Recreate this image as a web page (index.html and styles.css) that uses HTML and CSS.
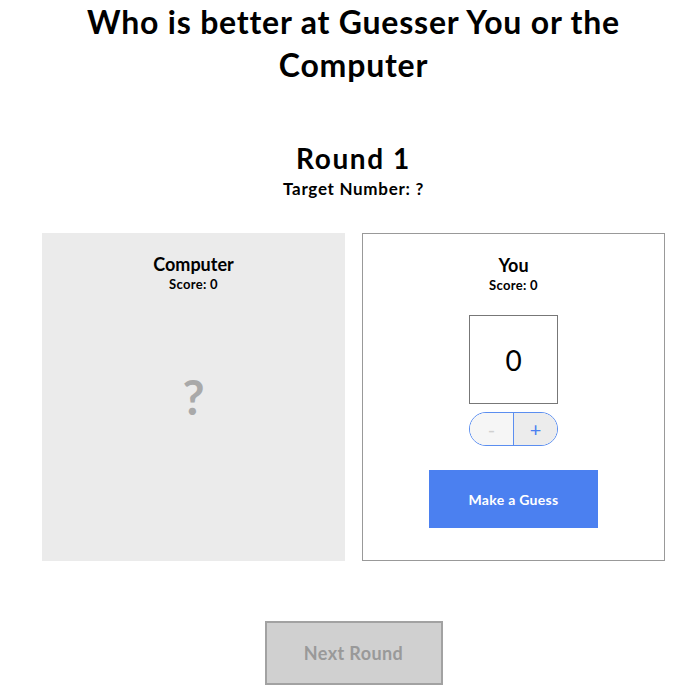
FILE: index.html
```html
<!DOCTYPE html>
<html>
<head>
<meta charset="utf-8">
<link rel="stylesheet" href="styles.css">
</head>
<body>
<div class="page">
  <h1 class="title">Who is better at Guesser You or the Computer</h1>
  <section class="round">
    <h2 class="round-title">Round 1</h2>
    <p class="target">Target Number: ?</p>
  </section>
  <div class="cards">
    <div class="card card-computer">
      <h3 class="card-name">Computer</h3>
      <p class="card-score">Score: 0</p>
      <div class="mystery">?</div>
    </div>
    <div class="card card-you">
      <h3 class="card-name">You</h3>
      <p class="card-score">Score: 0</p>
      <div class="guess-box">0</div>
      <div class="stepper">
        <button class="step step-minus">-</button>
        <button class="step step-plus">+</button>
      </div>
      <button class="guess-btn">Make a Guess</button>
    </div>
  </div>
  <div class="next-wrap">
    <button class="next-btn">Next Round</button>
  </div>
</div>
</body>
</html>
```
FILE: styles.css
```css
* { box-sizing: border-box; }
body {
  margin: 0;
  font-family: "Lato", "Noto Sans", sans-serif;
  color: #000;
  background: #fff;
}
.page {
  padding-left: 21px;
  display: flex;
  flex-direction: column;
  align-items: center;
}
.title {
  margin: 0;
  width: 600px;
  text-align: center;
  font-size: 32px;
  line-height: 43px;
  font-weight: 700;
  letter-spacing: 0.8px;
}
.round {
  margin-top: 53px;
  text-align: center;
}
.round-title {
  margin: 0;
  font-size: 28px;
  line-height: 38px;
  font-weight: 700;
  letter-spacing: 1.6px;
}
.target {
  margin: 0;
  font-size: 17px;
  line-height: 24px;
  font-weight: 700;
  letter-spacing: 0.7px;
}
.cards {
  margin-top: 32px;
  display: flex;
  gap: 17px;
}
.card {
  width: 303px;
  height: 328px;
  display: flex;
  flex-direction: column;
  align-items: center;
  padding-top: 19px;
}
.card-computer { background: #ebebeb; }
.card-you { background: #fff; border: 1px solid #999; padding-top: 19px; }
.card-name {
  margin: 0;
  font-size: 18px;
  line-height: 24px;
  font-weight: 700;
}
.card-score {
  margin: 0;
  font-size: 13px;
  line-height: 17px;
  font-weight: 700;
  letter-spacing: 0.3px;
}
.mystery {
  margin-top: 74px;
  font-size: 48px;
  line-height: 60px;
  font-weight: 700;
  color: #a9a9a9;
}
.guess-box {
  margin-top: 21px;
  width: 89px;
  height: 89px;
  border: 1px solid #777;
  display: flex;
  align-items: center;
  justify-content: center;
  font-size: 28px;
  font-weight: 400;
}
.stepper {
  margin-top: 8px;
  width: 89px;
  height: 34px;
  display: flex;
  border: 1px solid #5b8ef0;
  border-radius: 17px;
  overflow: hidden;
}
.step {
  flex: 1;
  border: 0;
  margin: 0;
  padding: 0;
  font-family: inherit;
  font-size: 20px;
  line-height: 32px;
}
.step-minus { background: #f6f6f6; color: #d0d0d0; border-right: 1px solid #5b8ef0; }
.step-plus { background: #ececec; color: #4b80f0; }
.guess-btn {
  margin-top: 24px;
  width: 169px;
  height: 58px;
  border: 0;
  background: #4b80f0;
  color: #fff;
  font-family: inherit;
  font-size: 14px;
  font-weight: 700;
  letter-spacing: 0.3px;
}
.next-wrap {
  margin-top: 60px;
}
.next-btn {
  width: 178px;
  height: 64px;
  background: #d0d0d0;
  border: 2px solid #a2a2a2;
  color: #999;
  font-family: inherit;
  font-size: 18px;
  font-weight: 700;
  letter-spacing: 0.4px;
}
```
